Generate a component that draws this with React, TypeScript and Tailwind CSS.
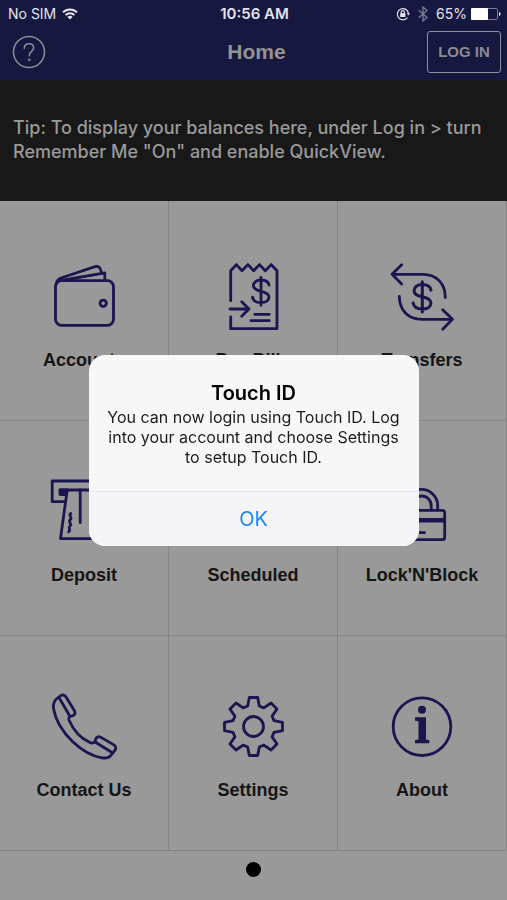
import type { ReactNode } from "react";

function Glyph({ children }: { children: ReactNode }) {
  return (
    <svg
      viewBox="0 0 72 72"
      className="size-[72px] shrink-0"
      fill="none"
      stroke="currentColor"
      strokeWidth="2.8"
      strokeLinecap="round"
      strokeLinejoin="round"
      aria-hidden="true"
    >
      {children}
    </svg>
  );
}

// dollar sign centred on 0,0
function Dollar() {
  return (
    <path d="M0 -14V14M8 -6.2C7.4 -9.4 4.4 -11.3 0 -11.3C-4.6 -11.3 -7.6 -9 -7.6 -5.7C-7.6 -2.2 -4.6 -1.1 0 0C4.8 1.1 8 2.3 8 5.8C8 9.2 4.8 11.4 0 11.4C-4.6 11.4 -7.9 9.4 -8.5 5.8" />
  );
}

const tiles = [
  {
    label: "Accounts",
    icon: (
      <>
        <rect x="7.5" y="19.7" width="58" height="44.6" rx="6" />
        <circle cx="55.2" cy="42.3" r="3.2" />
        <path d="M8.5 22C9 19 10.5 18 13 17L47 5.6C50.5 4.5 52.5 6.5 53.3 11" />
        <path d="M13 19.5L56.8 11.8V19.5" />
      </>
    ),
  },
  {
    label: "Pay Bills",
    icon: (
      <>
        <path d="M13.7 39.7V9.7L19.3 3.6L25 9.7L30.9 3.6L36.7 9.7L42.5 3.6L48.3 9.7L54.2 3.6L60 9.7V67.7H13.7V56" />
        <path d="M13 48H32M24.7 40.7L32 48L24.7 55.3" />
        <path d="M37.7 53.3H52.3M34 59.7H52.3" />
        <g transform="translate(44 30.3)">
          <Dollar />
        </g>
      </>
    ),
  },
  {
    label: "Transfers",
    icon: (
      <>
        <path d="M15.7 3.7L6 13.3L15.7 23M6 13.3H37C51 13.3 59.3 23 59.3 36.5" />
        <path d="M56.7 48.7L66.5 58.3L56.7 68.3M66.5 58.3H36C22 58.3 13.3 49 13.3 35.3" />
        <g transform="translate(36.3 35.8) scale(1.08)">
          <Dollar />
        </g>
      </>
    ),
  },
  {
    label: "Deposit",
    icon: (
      <>
        <path d="M17.5 25.7H4.2V5H67.8V25.7H54.5" />
        <path d="M12 14H60V19H53" />
        <path d="M12 14H19.2L18.4 18.6H12Z" fill="currentColor" />
        <path d="M19.2 14L12.5 62.6H59.5L52.8 14" />
        <path d="M32.2 14V46.7" />
        <path d="M22.8 37.5C20 39.5 24.6 41.5 22.4 43.5C19.5 46 24.4 47.5 22 50C19.4 52 23.4 53.8 20.6 55.8" />
      </>
    ),
  },
  {
    label: "Scheduled",
    icon: (
      <>
        <rect x="8" y="12" width="56" height="52" rx="4" />
        <path d="M8 26H64M22 6V17M50 6V17" />
      </>
    ),
  },
  {
    label: "Lock'N'Block",
    icon: (
      <>
        <path d="M19.3 34V29.6A16.2 16.2 0 0 1 51.7 29.6V34" />
        <path d="M26 34V29.6A9.6 9.6 0 0 1 45.2 29.6V34" />
        <rect x="12.5" y="34.3" width="46.2" height="29.4" rx="2.5" />
        <path d="M12.5 44.2H58.7" strokeWidth="4.6" strokeLinecap="butt" />
        <path d="M20 56.7H38.5" />
      </>
    ),
  },
  {
    label: "Contact Us",
    icon: (
      <>
        <path d="M9 7.5L12.5 4.8C14.5 3.4 16.6 3.7 18 6L26.3 19.5C27.7 22 27 23.8 24.6 24.7L22.3 25.5C20.6 26.2 20.4 27.6 21.2 29.5C25.5 39.5 32 46.8 41.5 51.3C44 52.5 46.3 52.3 47 50.2L47.8 48C48.7 45.6 50.6 45.1 53 46.4L65.5 53.6C67.9 55 68.4 57 67 59.2L63.6 63.6C61.5 66.4 58.3 67.5 54 66.8C44.5 65.4 34.5 60 24.5 50.5C14.5 40.8 7.5 28.5 5.6 18C4.9 13.6 5.8 10 9 7.5Z" />
        <path d="M12 8.2L21.8 25M47.5 51.3L64 61.5" />
      </>
    ),
  },
  {
    label: "Settings",
    icon: (
      <g transform="translate(36.5 35.5)">
        <path d="M-4.2 -29H4.2L5.8 -20.5L10.4 -18.6L17.5 -23.5L23.5 -17.5L18.6 -10.4L20.5 -5.8L29 -4.2V4.2L20.5 5.8L18.6 10.4L23.5 17.5L17.5 23.5L10.4 18.6L5.8 20.5L4.2 29H-4.2L-5.8 20.5L-10.4 18.6L-17.5 23.5L-23.5 17.5L-18.6 10.4L-20.5 5.8L-29 4.2V-4.2L-20.5 -5.8L-18.6 -10.4L-23.5 -17.5L-17.5 -23.5L-10.4 -18.6L-5.8 -20.5Z" />
        <circle r="10" />
      </g>
    ),
  },
  {
    label: "About",
    icon: (
      <>
        <circle cx="36" cy="35.7" r="28.8" />
        <circle cx="36" cy="18.7" r="4" fill="currentColor" stroke="none" />
        <path
          d="M29 26.3H40V48.5L43.3 49V52.3H29V49L32.5 48.5V30.2L29 29.8Z"
          fill="currentColor"
          stroke="none"
        />
      </>
    ),
  },
];

function StatusBar() {
  return (
    <div className="grid h-7 grid-cols-3 items-center pr-1.5 pl-2 font-['Inter',sans-serif] text-sm leading-5 text-[#e4e4f0]">
      <div className="flex items-center gap-1.5">
        <span>No SIM</span>
        {/* wifi */}
        <svg viewBox="0 0 16 12" className="h-3 w-4" fill="none" stroke="currentColor" strokeWidth="2" aria-hidden="true">
          <path d="M1 4.4A10 10 0 0 1 15 4.4M3.6 7A6.3 6.3 0 0 1 12.4 7" />
          <path d="M8 11.6L5.4 8.9A3.8 3.8 0 0 1 10.6 8.9Z" fill="currentColor" stroke="none" />
        </svg>
      </div>
      <span className="text-center text-[15px] font-semibold whitespace-nowrap">10:56 AM</span>
      <div className="flex items-center justify-end">
        {/* rotation lock */}
        <svg viewBox="0 0 14 14" className="mr-2 size-3.5" fill="none" stroke="currentColor" strokeWidth="1.2" aria-hidden="true">
          <path d="M11.4 10.6A5.6 5.6 0 1 1 12.5 6.5" />
          <path d="M10.6 6.2H14L12.5 8.6Z" fill="currentColor" stroke="none" />
          <rect x="4.2" y="6.2" width="5.2" height="3.8" fill="currentColor" stroke="none" />
          <path d="M5.2 6.4V5.2A1.6 1.6 0 0 1 8.4 5.2V6.4" />
        </svg>
        {/* bluetooth */}
        <svg viewBox="0 0 10 16" className="mr-2 h-4 w-2.5 text-[#7c7c98]" fill="none" stroke="currentColor" strokeWidth="1.3" aria-hidden="true">
          <path d="M0.8 4.2L9 11.6L5 15V1L9 4.4L0.8 11.8" />
        </svg>
        <span>65%</span>
        {/* battery */}
        <svg viewBox="0 0 30 12" className="ml-1 h-3 w-[30px]" fill="none" aria-hidden="true">
          <rect x="0.5" y="0.5" width="26" height="11" rx="1" stroke="#7c7c98" />
          <rect x="0" y="0" width="17" height="12" rx="1" fill="#fff" />
          <path d="M28 4V8C29 7.6 29.6 6.9 29.6 6C29.6 5.1 29 4.4 28 4Z" fill="#e4e4f0" />
        </svg>
      </div>
    </div>
  );
}

export default function App() {
  return (
    <div className="flex min-h-screen flex-col bg-[#999999] font-['Liberation_Sans',Arial,sans-serif]">
      <header className="bg-[#17183f] pb-1">
        <StatusBar />
        <div className="flex h-12 items-center justify-between px-1.5">
          <div className="flex-1 pl-1.5">
            <button type="button" aria-label="Help" className="block text-[#8f8f9a]">
              <svg viewBox="0 0 34 34" className="size-[34px]" fill="none" stroke="currentColor" strokeWidth="1.5" strokeLinecap="round" aria-hidden="true">
                <circle cx="17" cy="17" r="15.5" />
                <path d="M12.3 13.2C12.3 10.3 14.3 8.7 17 8.7C19.8 8.7 21.7 10.4 21.7 12.8C21.7 16.2 17.3 16.3 17.3 20.8" />
                <circle cx="17.3" cy="24.8" r="0.5" fill="currentColor" />
              </svg>
            </button>
          </div>
          <h1 className="text-[21px] leading-7 font-bold text-[#939393]">Home</h1>
          <div className="flex flex-1 justify-end">
            <button
              type="button"
              className="h-[42px] w-[74px] rounded-[3px] border border-[#8f8f9a] text-[15px] font-bold whitespace-nowrap text-[#8b8b92]"
            >
              LOG IN
            </button>
          </div>
        </div>
      </header>

      <p className="bg-[#181818] px-[13px] pt-9 pb-[37px] text-lg leading-6 font-medium text-[#9a9a9a] font-['Inter',sans-serif]">
        Tip: To display your balances here, under Log in &gt; turn Remember Me "On" and enable QuickView.
      </p>

      <nav className="grid grid-cols-3 grid-rows-[220px_215px_215px]">
        {tiles.map((tile) => (
          <a
            key={tile.label}
            href="#"
            className="flex flex-col items-center justify-end gap-4 border-r border-b border-[#838383] pb-[49px] text-[#191650]"
          >
            <Glyph>{tile.icon}</Glyph>
            <span className="text-lg leading-[22px] font-bold text-[#151515]">{tile.label}</span>
          </a>
        ))}
      </nav>

      <footer className="flex flex-1 items-center justify-center pb-3">
        <span className="size-[15px] rounded-full bg-black" />
      </footer>

      <div className="fixed inset-0 flex items-center justify-center">
        <div
          role="alertdialog"
          aria-labelledby="alert-title"
          aria-describedby="alert-text"
          className="w-[330px] overflow-hidden rounded-2xl bg-[#f7f7f8] text-center font-['Inter',sans-serif]"
        >
          <div className="px-4 pt-6 pb-6">
            <h2 id="alert-title" className="text-xl leading-7 font-semibold text-black">
              Touch ID
            </h2>
            <p id="alert-text" className="text-base leading-5 text-[#1c1c1c]">
              You can now login using Touch ID. Log into your account and choose Settings to setup Touch ID.
            </p>
          </div>
          <button
            type="button"
            className="block h-[55px] w-full border-t border-[#e6e6ea] bg-[#f5f5f9] text-xl text-[#1a86f8]"
          >
            OK
          </button>
        </div>
      </div>
    </div>
  );
}
